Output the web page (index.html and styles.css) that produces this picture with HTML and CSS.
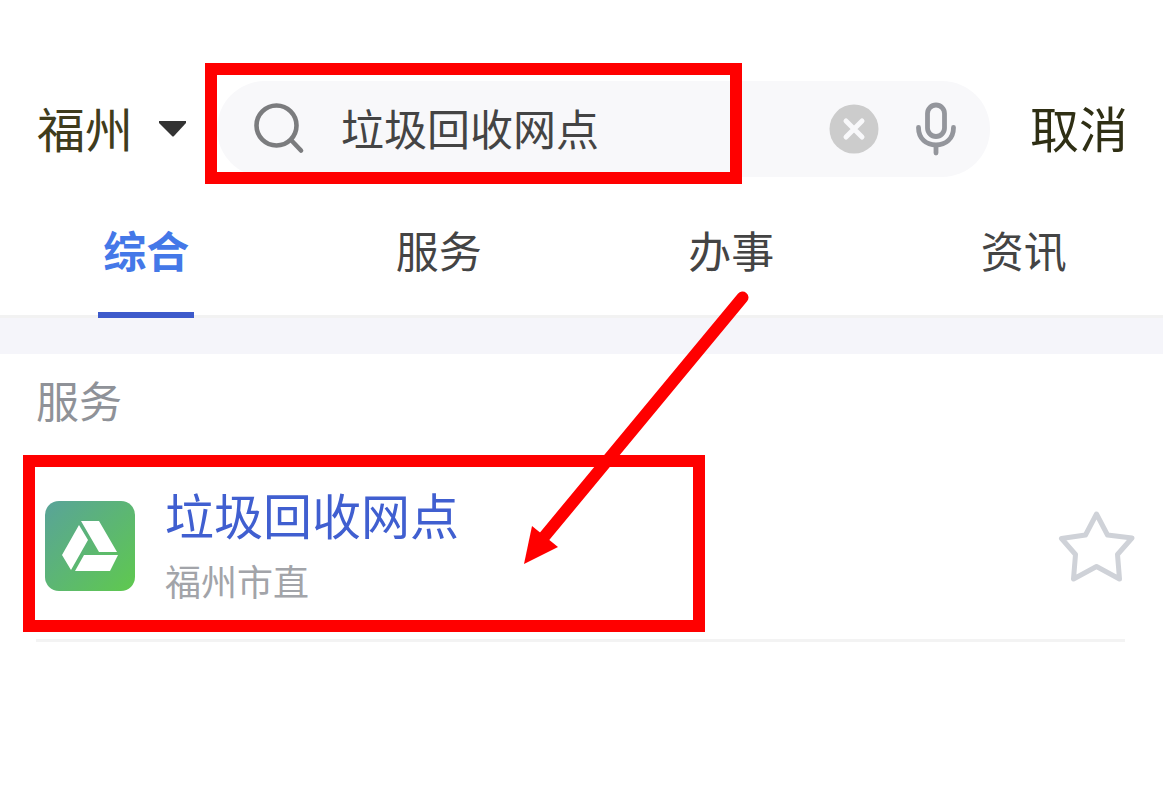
FILE: index.html
```html
<!DOCTYPE html>
<html lang="zh-CN">
	<head>
		<meta charset="UTF-8">
		<meta name="viewport" content="width=device-width,initial-scale=1.0">
		<meta name="format-detection" content="telephone=no,email=no,adress=no">
		<title>搜索</title>
		<link rel="stylesheet" href="styles.css">
	</head>
	<body>
		<div class="container">
			<header class="top">
				<button class="city" type="button">
					<span>福州</span>
					<svg class="caret" width="28" height="18" viewBox="0 0 28 18"><path d="M0 1h27v2L15 16q-1 1-2 0L0 3z" fill="#333"/></svg>
				</button>
				<form class="search">
					<label for="keyword" aria-label="搜索">
						<svg width="52" height="52" viewBox="0 0 52 52" fill="none" stroke="#7b7c7e" stroke-width="4.600" stroke-linecap="round">
							<circle cx="23.500" cy="22.500" r="20"/>
							<path d="M39 38l9 9.500"/>
						</svg>
					</label>
					<input id="keyword" type="text" value="垃圾回收网点">
					<button class="clear" type="button" aria-label="清空">
						<svg width="50" height="50" viewBox="0 0 50 50">
							<circle cx="25" cy="25" r="24.500" fill="#ccc"/>
							<path d="M17 17l16 16M33 17l-16 16" stroke="#f8f8fa" stroke-width="5" stroke-linecap="round"/>
						</svg>
					</button>
					<button class="voice" type="button" aria-label="语音">
						<svg width="42" height="54" viewBox="0 0 42 54" fill="none" stroke="#94969c" stroke-width="4.800" stroke-linecap="round">
							<rect x="12.500" y="3" width="17" height="31.500" rx="8.500"/>
							<path d="M3.500 25.500c0 11.500 8 17.500 17.500 17.500s17.500-6 17.500-17.500M21 44v7"/>
						</svg>
					</button>
					<i class="mark mark-search"></i>
				</form>
				<button class="cancel" type="button">取消</button>
			</header>

			<nav class="tabs">
				<a class="on" href="#">综合</a>
				<a href="#">服务</a>
				<a href="#">办事</a>
				<a href="#">资讯</a>
			</nav>

			<section class="list">
				<h4>服务</h4>
				<div class="item">
					<svg class="logo" width="90" height="90" viewBox="0 0 90 90">
						<defs>
							<linearGradient id="green" x1="0" y1="0" x2="1" y2="1">
								<stop offset="0" stop-color="#59a399"/>
								<stop offset="1" stop-color="#5fc94e"/>
							</linearGradient>
						</defs>
						<rect width="90" height="90" rx="14" fill="url(#green)"/>
						<path d="M36 20h18l18 31H54zM34 24l9 15-17 30-9-15zM39 54h34l-8 16H30z" fill="#fff"/>
					</svg>
					<div class="info">
						<a href="#">垃圾回收网点</a>
						<p>福州市直</p>
					</div>
					<button class="star" type="button" aria-label="收藏">
						<svg width="78" height="78" viewBox="0 0 78 78">
							<path d="M38.500 7L49.500 28l24.500 3L59.500 47.500 61.500 72 38.500 59.500 15.500 72 17.500 47.500 3.500 31.500 27.500 28z" fill="none" stroke="#cfd2d8" stroke-width="5" stroke-linejoin="round"/>
						</svg>
					</button>
					<i class="mark mark-item"></i>
					<!-- 箭头 -->
					<svg class="arrow" width="240" height="280" viewBox="0 0 240 280">
						<path d="M222.500 12.500L24 252" stroke="#f00" stroke-width="12" stroke-linecap="round"/>
						<path d="M4 279l8-38 26 21z" fill="#f00"/>
					</svg>
				</div>
			</section>
		</div>
	</body>
</html>
```
FILE: styles.css
```css
* {
	margin: 0;
	padding: 0;
	box-sizing: border-box;
}

body {
	background: #fff;
	color: #444;
	font-size: 43px;
	font-family: "Noto Sans CJK SC", "微软雅黑", sans-serif;
	overflow-x: hidden;
}

a {
	color: inherit;
	text-decoration: none;
}

button, input {
	border: none;
	outline: none;
	background: none;
	color: inherit;
	font-family: inherit;
}

svg {
	display: block;
	flex: none;
}

.container {
	width: 100%;
	overflow: hidden;
}

/*顶部搜索*/
.top {
	display: flex;
	align-items: center;
	padding: 81px 35px 0 37px;
}

.city, .cancel {
	flex: none;
	line-height: 72px;
	font-size: 48px;
	color: #3f3c1c;
}

.city {
	display: flex;
	align-items: center;
	gap: 26px;
	margin-right: 30px;
}

.city span, .cancel, .search input {
	padding-bottom: 4px;
}

.cancel {
	margin-left: 40px;
	font-size: 49px;
	color: #2f2f14;
}

.search {
	position: relative;
	flex: 1;
	min-width: 0;
	height: 96px;
	display: flex;
	align-items: center;
	padding: 0 33px 0 36px;
	border-radius: 48px;
	background: #f8f8fa;
}

.search input {
	flex: 1;
	min-width: 0;
	height: 72px;
	margin-left: 36px;
	font-size: 43px;
}

.voice {
	margin-left: 36px;
}

/*标签*/
.tabs {
	display: flex;
	margin-right: -7px;
	height: 141px;
	border-bottom: 3px solid #f2f2f2;
}

.tabs a {
	position: relative;
	flex: 1;
	padding-top: 40px;
	line-height: 64px;
	text-align: center;
}

.tabs .on {
	color: #4478e8;
	font-weight: bold;
}

.tabs .on:after {
	content: '';
	position: absolute;
	left: 50%;
	bottom: -3px;
	width: 96px;
	height: 6px;
	margin-left: -48px;
	background: #3d5acb;
}

/*列表*/
.list {
	border-top: 36px solid #f5f5fa;
	padding: 21px 38px 0 36px;
}

.list h4 {
	line-height: 48px;
	font-size: 43px;
	font-weight: normal;
	color: #8f9298;
}

.item {
	position: relative;
	display: flex;
	align-items: center;
	margin-top: 32px;
	padding: 25px 0 27px;
	border-bottom: 3px solid #f3f3f3;
}

.logo {
	margin-left: 9px;
}

.info {
	flex: 1;
	margin-left: 30px;
}

.info a {
	display: block;
	line-height: 68px;
	font-size: 49px;
	color: #405fd0;
}

.info p {
	line-height: 64px;
	font-size: 36px;
	color: #a2a4a9;
}

.star {
	margin-right: -11px;
}

/*红框标注*/
.mark {
	position: absolute;
	border: 12px solid #f00;
	pointer-events: none;
}

.mark-search {
	left: -12px;
	top: -18px;
	width: 537px;
	height: 121px;
}

.mark-item {
	left: -13px;
	top: 0;
	width: 682px;
	height: 177px;
}

.arrow {
	position: absolute;
	left: 484px;
	top: -170px;
	pointer-events: none;
}
```
